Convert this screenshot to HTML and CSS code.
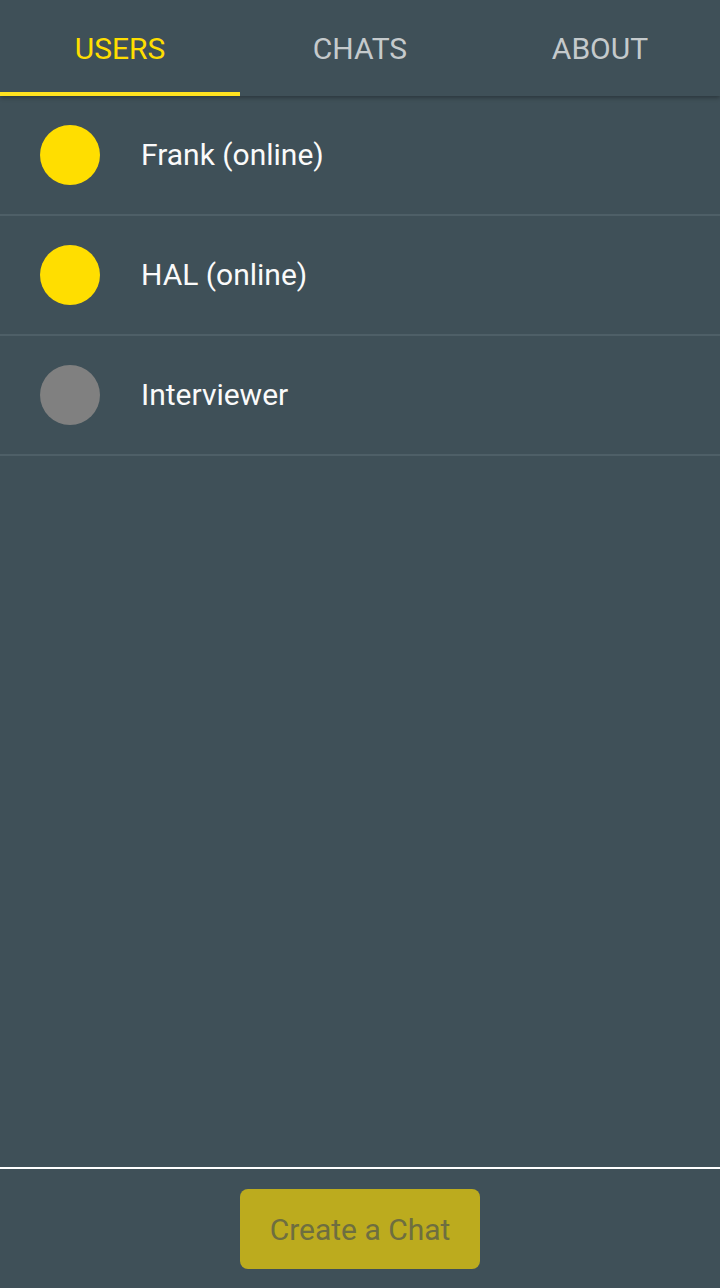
FILE: index.html
```html
<!DOCTYPE html>
<html>
<head>
<meta charset="utf-8">
<link rel="stylesheet" href="styles.css">
</head>
<body>
<div class="app">
  <nav class="tabs">
    <div class="tab active">USERS</div>
    <div class="tab">CHATS</div>
    <div class="tab">ABOUT</div>
  </nav>
  <ul class="users">
    <li class="user"><span class="dot online"></span><span class="name">Frank (online)</span></li>
    <li class="user"><span class="dot online"></span><span class="name">HAL (online)</span></li>
    <li class="user"><span class="dot offline"></span><span class="name">Interviewer</span></li>
  </ul>
  <footer class="footer">
    <button class="create">Create a Chat</button>
  </footer>
</div>
</body>
</html>
```
FILE: styles.css
```css
* { box-sizing: border-box; }
html, body { margin: 0; padding: 0; }
body {
  background: #3f5058;
  font-family: Roboto, "Noto Sans", sans-serif;
  color: #fff;
}
.app {
  display: flex;
  flex-direction: column;
  height: 1288px;
}
.tabs {
  display: flex;
  height: 96px;
  background: #3f5058;
  box-shadow: 0 2px 4px rgba(0,0,0,0.3);
  position: relative;
  z-index: 1;
}
.tab {
  flex: 1;
  display: flex;
  align-items: center;
  justify-content: center;
  font-size: 30px;
  color: #c5cacc;
  padding-top: 4px;
  border-bottom: 4px solid transparent;
}
.tab.active {
  color: #ffde00;
  border-bottom-color: #ffe21f;
}
.users {
  list-style: none;
  margin: 0;
  padding: 0;
  flex: 1;
}
.user {
  display: flex;
  align-items: center;
  height: 120px;
  padding-left: 40px;
  border-bottom: 2px solid #4e5f67;
}
.dot {
  width: 60px;
  height: 60px;
  border-radius: 50%;
}
.dot.online { background: #ffde00; }
.dot.offline { background: #808080; }
.name {
  margin-left: 41px;
  font-size: 30px;
  color: #fafafa;
  margin-bottom: 2px;
}
.footer {
  border-top: 2px solid #ffffff;
  height: 121px;
  display: flex;
  justify-content: center;
  align-items: flex-start;
  padding-top: 20px;
}
.create {
  width: 240px;
  height: 80px;
  border: none;
  border-radius: 8px;
  background: #bcab1e;
  color: #6e6e40;
  font-family: Roboto, "Noto Sans", sans-serif;
  font-size: 30px;
  padding: 0;
}
```
